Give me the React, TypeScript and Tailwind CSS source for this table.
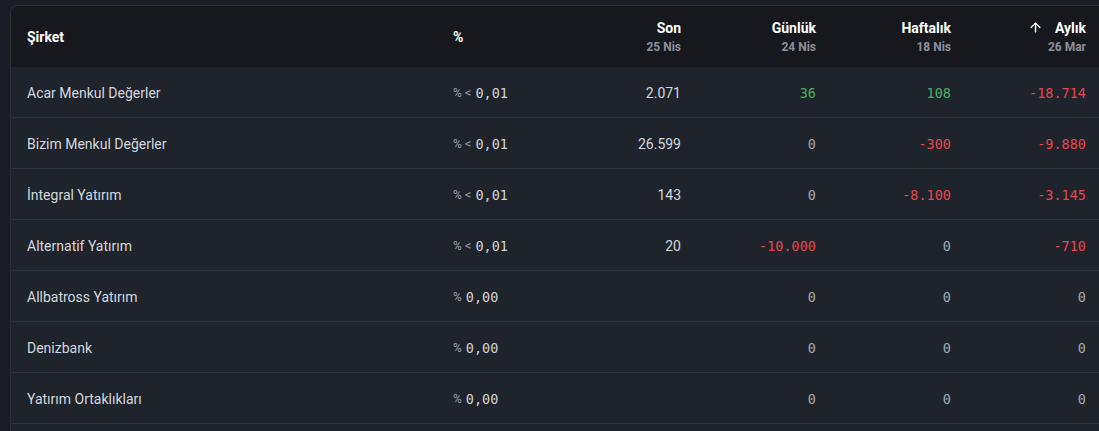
import { ArrowUp } from "lucide-react";

type Row = {
	name: string;
	lt: boolean;
	pct: string;
	son: string;
	gun: string;
	haf: string;
	ay: string;
};

const rows: Row[] = [
	{ name: "Acar Menkul Değerler", lt: true, pct: "0,01", son: "2.071", gun: "36", haf: "108", ay: "-18.714" },
	{ name: "Bizim Menkul Değerler", lt: true, pct: "0,01", son: "26.599", gun: "0", haf: "-300", ay: "-9.880" },
	{ name: "İntegral Yatırım", lt: true, pct: "0,01", son: "143", gun: "0", haf: "-8.100", ay: "-3.145" },
	{ name: "Alternatif Yatırım", lt: true, pct: "0,01", son: "20", gun: "-10.000", haf: "0", ay: "-710" },
	{ name: "Allbatross Yatırım", lt: false, pct: "0,00", son: "", gun: "0", haf: "0", ay: "0" },
	{ name: "Denizbank", lt: false, pct: "0,00", son: "", gun: "0", haf: "0", ay: "0" },
	{ name: "Yatırım Ortaklıkları", lt: false, pct: "0,00", son: "", gun: "0", haf: "0", ay: "0" },
];

const grid = "grid grid-cols-[426px_130px_130px_135px_135px_135px]";
const mono = "font-['DejaVu_Sans_Mono',monospace] text-[13.5px]";

const tone = (v: string) => {
	if (v === "0") return "text-[#a3a9b4]";
	if (v.startsWith("-")) return "text-[#e5484d]";
	return "text-[#4cb061]";
};

const HeadCell = ({ title, sub, arrow }: { title: string; sub: string; arrow?: boolean }) => (
	<div className="flex flex-col items-end justify-center pr-4">
		<div className="flex items-center text-[14px] font-bold leading-[18px] text-white">
			{arrow && <ArrowUp size={15} strokeWidth={2.2} className="mr-[12px]" />}
			{title}
		</div>
		<div className="mt-[2px] text-[12px] font-bold leading-[16px] text-[#8b919c]">{sub}</div>
	</div>
);

const Num = ({ v }: { v: string }) => (
	<div className={`flex items-center justify-end pr-4 pt-[2px] ${mono} ${tone(v)}`}>{v}</div>
);

export default function App() {
	return (
		<div className="flex h-[431px] w-[1099px] flex-col overflow-hidden bg-[#1a1d25] pt-[5px] pl-[10px] font-['Roboto',sans-serif]">
			<div className="flex w-[1091px] flex-1 flex-col overflow-hidden rounded-tl-[8px] border-l border-t border-[#2a2e37] bg-[#1f232b]">
				<div className={`${grid} h-[61px] shrink-0 bg-[#16181d]`}>
					<div className="flex items-center pl-4 pt-[2px] text-[14px] font-bold text-white">Şirket</div>
					<div className="flex items-center pl-4 pt-[2px] text-[14px] font-bold text-white">%</div>
					<HeadCell title="Son" sub="25 Nis" />
					<HeadCell title="Günlük" sub="24 Nis" />
					<HeadCell title="Haftalık" sub="18 Nis" />
					<HeadCell title="Aylık" sub="26 Mar" arrow />
				</div>
				{rows.map((r) => (
					<div key={r.name} className={`${grid} h-[51px] shrink-0 border-b border-[#2d323b]`}>
						<div className="flex items-center pl-4 pt-[2px] text-[14px] text-[#d3d7de]">{r.name}</div>
						<div className="flex items-center pl-4 pt-[2px]">
							<span className="text-[12px] text-[#9aa1ad]">%</span>
							{r.lt && <span className="ml-[3px] text-[13px] text-[#9aa1ad]">&lt;</span>}
							<span className={`ml-[4px] text-[#d0d4da] ${mono}`}>{r.pct}</span>
						</div>
						<div className="flex items-center justify-end pr-4 pt-[2px] text-[14px] text-[#d3d7de]">{r.son}</div>
						<Num v={r.gun} />
						<Num v={r.haf} />
						<Num v={r.ay} />
					</div>
				))}
			</div>
		</div>
	);
}
